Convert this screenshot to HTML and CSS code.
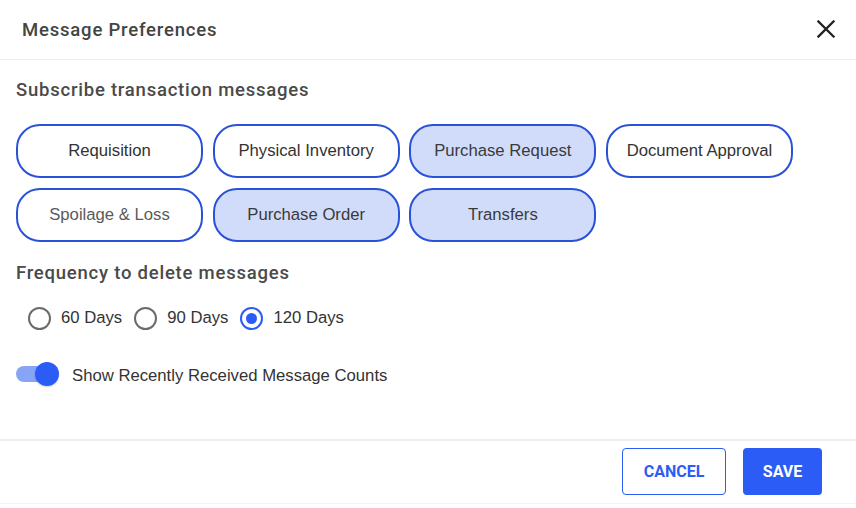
FILE: index.html
```html
<!DOCTYPE html>
<html lang="en">
<head>
    <meta charset="UTF-8">
    <meta name="viewport" content="width=device-width, initial-scale=1.0">
    <title>Message Preferences</title>
    <link rel="stylesheet" href="styles.css">
</head>
<body>
    <div class="dialog">
        <header class="dialog-header">
            <h1>Message Preferences</h1>
            <button class="close-btn" aria-label="Close">
                <svg width="18" height="18" viewBox="0 0 18 18">
                    <path d="M1.5 1.5 L16.5 16.5 M16.5 1.5 L1.5 16.5" stroke="#222" stroke-width="2.3" stroke-linecap="square" fill="none"/>
                </svg>
            </button>
        </header>

        <main class="dialog-body">
            <h2 class="section-title">Subscribe transaction messages</h2>
            <div class="chips">
                <button class="chip">Requisition</button>
                <button class="chip">Physical Inventory</button>
                <button class="chip selected">Purchase Request</button>
                <button class="chip">Document Approval</button>
                <button class="chip muted">Spoilage &amp; Loss</button>
                <button class="chip selected">Purchase Order</button>
                <button class="chip selected">Transfers</button>
            </div>

            <h2 class="section-title freq-title">Frequency to delete messages</h2>
            <div class="radios">
                <label class="radio"><span class="radio-dot"></span>60 Days</label>
                <label class="radio"><span class="radio-dot"></span>90 Days</label>
                <label class="radio checked"><span class="radio-dot"></span>120 Days</label>
            </div>

            <div class="toggle-row">
                <span class="toggle"><span class="toggle-thumb"></span></span>
                <span class="toggle-label">Show Recently Received Message Counts</span>
            </div>
        </main>

        <footer class="dialog-footer">
            <button class="btn btn-outline">CANCEL</button>
            <button class="btn btn-primary">SAVE</button>
        </footer>
    </div>
</body>
</html>
```

FILE: styles.css
```css
/* Message preferences dialog */
body {
    margin: 0;
    padding: 0;
    background: #FFFFFF;
    font-family: Roboto, "Liberation Sans", sans-serif;
    color: #333333;
}

.dialog {
    width: 856px;
    height: 504px;
    display: flex;
    flex-direction: column;
}

.dialog-header {
    height: 59px;
    border-bottom: 1px solid #EEEEEE;
    display: flex;
    align-items: center;
    justify-content: space-between;
    padding: 0 21px 0 22px;
}

.dialog-header h1 {
    margin: 0;
    font-size: 18.5px;
    font-weight: 500;
    color: #444444;
    letter-spacing: 0.8px;
}

.close-btn {
    border: none;
    background: none;
    padding: 0;
    width: 18px;
    height: 18px;
    margin-top: -2px;
    cursor: pointer;
}

.dialog-body {
    flex: 1;
    padding: 18px 16px 0;
}

.section-title {
    margin: 0;
    font-size: 18.5px;
    line-height: 24px;
    font-weight: 500;
    color: #4A4A4A;
    letter-spacing: 0.77px;
}

.chips {
    display: grid;
    grid-template-columns: repeat(4, 187px);
    column-gap: 9.67px;
    row-gap: 10px;
    margin-top: 22px;
}

.chip {
    height: 54px;
    border: 2px solid #2A52D9;
    border-radius: 24px;
    background: #FFFFFF;
    font-family: Arial, "Liberation Sans", sans-serif;
    font-size: 16.7px;
    color: #333333;
    cursor: pointer;
}

.chip.muted {
    color: #5A5A5A;
}

.chip.selected {
    background: #D1DCFB;
    color: #3A3A3A;
}

.freq-title {
    margin-top: 19px;
}

.radios {
    display: flex;
    align-items: center;
    margin-top: 21px;
    padding-left: 12px;
    height: 24px;
}

.radio {
    display: flex;
    align-items: center;
    font-family: Arial, "Liberation Sans", sans-serif;
    font-size: 16.7px;
    color: #333333;
    margin-right: 12px;
}

.radio-dot {
    box-sizing: border-box;
    width: 23px;
    height: 23px;
    border: 2px solid #6B6B6B;
    border-radius: 50%;
    margin-right: 10px;
    display: flex;
    align-items: center;
    justify-content: center;
}

.radio.checked .radio-dot {
    border-color: #2B5CF5;
}

.radio.checked .radio-dot::after {
    content: "";
    width: 11px;
    height: 11px;
    border-radius: 50%;
    background: #2B5CF5;
}

.toggle-row {
    display: flex;
    align-items: center;
    margin-top: 32px;
    height: 24px;
}

.toggle {
    position: relative;
    width: 36px;
    height: 16px;
    border-radius: 8px;
    background: #88A4F7;
    margin-right: 20px;
}

.toggle-thumb {
    position: absolute;
    left: 19px;
    top: -4px;
    width: 24px;
    height: 24px;
    border-radius: 50%;
    background: #2B5CF5;
    box-shadow: 0 1px 2px rgba(0, 0, 0, 0.2);
}

.toggle-label {
    font-family: Arial, "Liberation Sans", sans-serif;
    font-size: 16.7px;
    color: #333333;
    padding-top: 4px;
}

.dialog-footer {
    border-top: 2px solid #EEEEEE;
    border-bottom: 1px solid #F3F3F3;
    display: flex;
    justify-content: flex-end;
    gap: 17px;
    padding: 7px 34px 8px 0;
}

.btn {
    height: 47px;
    border-radius: 4px;
    font-family: Roboto, "Liberation Sans", sans-serif;
    font-size: 16px;
    font-weight: 700;
    cursor: pointer;
}

.btn-outline {
    width: 104px;
    background: #FFFFFF;
    border: 1px solid #2B5CF5;
    color: #2B5CF5;
}

.btn-primary {
    width: 79px;
    background: #2B5CF5;
    border: none;
    color: #FFFFFF;
}
```
